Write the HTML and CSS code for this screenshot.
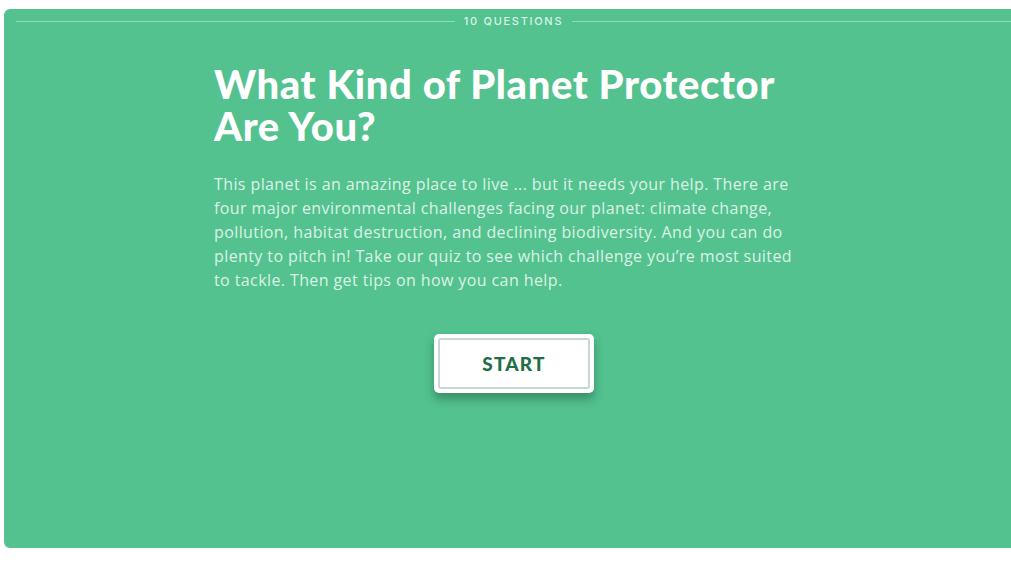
FILE: index.html
```html
<!DOCTYPE html>
<html lang="en">
<head>
<meta charset="utf-8">
<title>What Kind of Planet Protector Are You?</title>
<link rel="stylesheet" href="styles.css">
</head>
<body>
<main class="quiz">
  <div class="count">
    <span class="rule"></span>
    <span class="count-label">10 QUESTIONS</span>
    <span class="rule"></span>
  </div>
  <section class="intro">
    <h1 class="title">What Kind of Planet Protector Are You?</h1>
    <p class="desc">This planet is an amazing place to live ... but it needs your help. There are four major environmental challenges facing our planet: climate change, pollution, habitat destruction, and declining biodiversity. And you can do plenty to pitch in! Take our quiz to see which challenge you’re most suited to tackle. Then get tips on how you can help.</p>
    <div class="actions">
      <button class="start"><span class="start-inner">START</span></button>
    </div>
  </section>
</main>
</body>
</html>
```

FILE: styles.css
```css
html, body {
  margin: 0;
  padding: 0;
  background: #ffffff;
}
body {
  padding: 9px 0 0 4px;
  overflow: hidden;
  height: 562px;
  box-sizing: border-box;
}
.quiz {
  background: #53c28f;
  width: 1030px;
  height: 539px;
  border-radius: 6px 0 0 6px;
  box-sizing: border-box;
  padding-top: 4px;
  font-family: "Open Sans", "Liberation Sans", sans-serif;
}
.count {
  display: flex;
  align-items: center;
  gap: 9px;
  padding-left: 12px;
  width: 1007px;
  box-sizing: border-box;
  height: 16px;
}
.rule {
  flex: 1;
  height: 1px;
  background: #8fdcb7;
}
.count-label {
  font-family: "Inter", "Liberation Sans", sans-serif;
  font-size: 11px;
  letter-spacing: 1.7px;
  color: #d9f3e6;
  font-weight: 500;
}
.intro {
  margin-left: 210px;
  width: 600px;
  padding-top: 34px;
}
.title {
  margin: 0;
  width: 590px;
  font-family: "Lato", "Liberation Sans", sans-serif;
  font-weight: 900;
  font-size: 40px;
  line-height: 42px;
  color: #ffffff;
  letter-spacing: 0.6px;
}
.desc {
  margin: 25px 0 0 0;
  font-size: 16px;
  line-height: 24px;
  color: #dcf2e6;
  width: 592px;
  letter-spacing: 0.4px;
}
.actions {
  display: flex;
  justify-content: center;
  width: 600px;
  padding-top: 42px;
}
.start {
  width: 160px;
  height: 59px;
  background: #ffffff;
  border: none;
  border-radius: 5px;
  padding: 4px;
  box-shadow: 0 6px 10px rgba(20, 80, 50, 0.45);
  cursor: pointer;
}
.start-inner {
  display: flex;
  align-items: center;
  justify-content: center;
  height: 100%;
  box-sizing: border-box;
  border: 2px solid #c5d9cf;
  border-radius: 3px;
  font-family: "Lato", "Liberation Sans", sans-serif;
  font-weight: 900;
  font-size: 19px;
  letter-spacing: 1.2px;
  color: #1f6f48;
}
```
